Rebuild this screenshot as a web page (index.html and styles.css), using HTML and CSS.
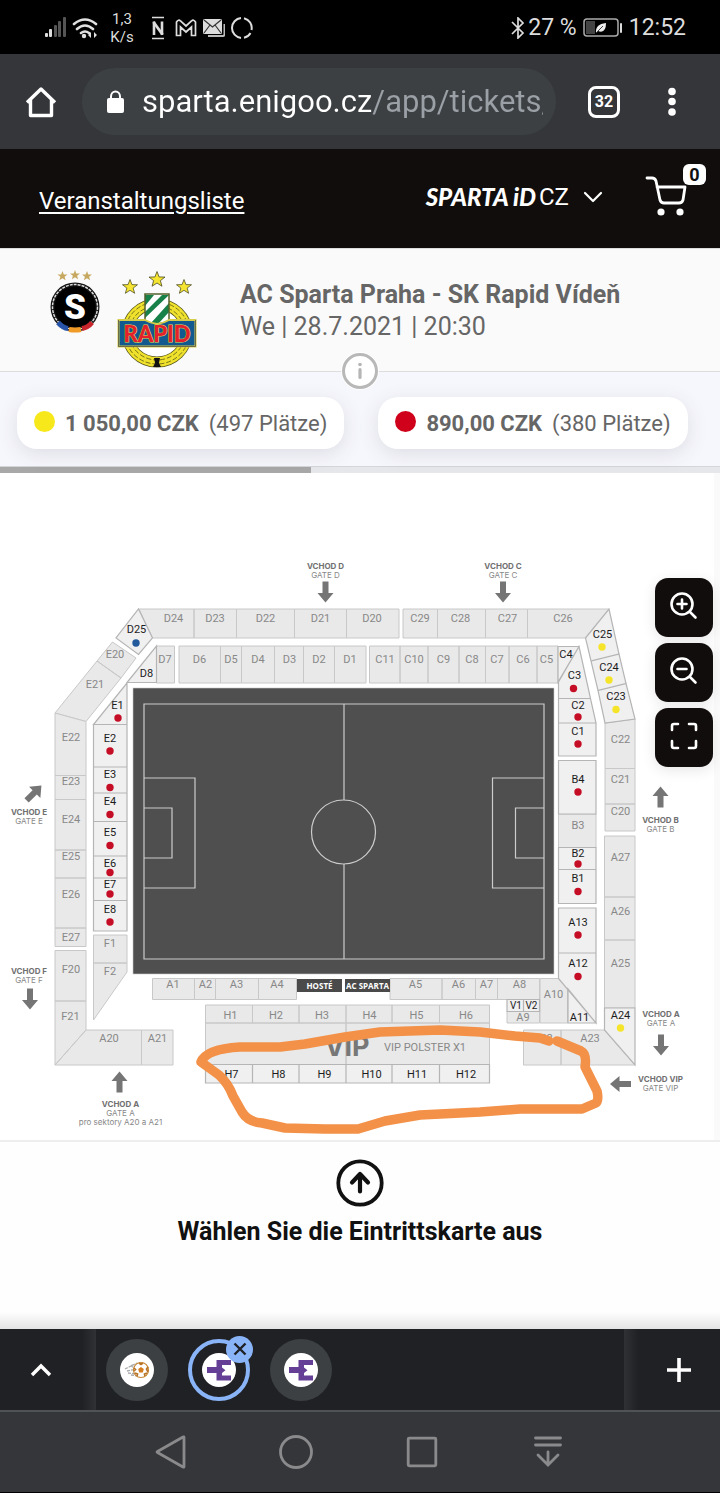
FILE: index.html
```html
<!DOCTYPE html>
<html lang="de">
<head>
<meta charset="utf-8">
<meta name="viewport" content="width=device-width, initial-scale=1">
<title>AC Sparta Praha - SK Rapid Vídeň</title>
<link rel="stylesheet" href="styles.css">
</head>
<body>
<div class="status">
  <svg class="ic-signal" width="22" height="22" viewBox="0 0 22 22"><g fill="#ddd"><rect y="16" width="3" height="4" rx="1"/><rect x="4" y="12" width="3" height="8" rx="1"/></g><g fill="#555"><rect x="9" y="8" width="3" height="12" rx="1"/><rect x="13" y="4" width="3" height="16" rx="1"/><rect x="18" width="3" height="20" rx="1"/></g></svg>
  <svg class="ic-wifi" width="26" height="22" viewBox="0 0 26 22"><g fill="none" stroke="#e0e0e0" stroke-width="2.6" stroke-linecap="round"><path d="M2 7q11-9 22 0M5 12q8-7 16 0M9 16q4-3 8 0"/></g><circle cx="12" cy="19" r="2.2" fill="#e0e0e0"/><path d="M16 18l3-3v6zM25 18l-3-3v6z" fill="#e0e0e0"/></svg>
  <div class="speed">1,3<br>K/s</div>
  <svg class="ic-n" width="14" height="24" viewBox="0 0 14 24"><path d="M1 1.500h12M1 22.500h12" stroke="#ddd" stroke-width="1.500"/><path d="M3 19V5.500M11 19V5.500" stroke="#ddd" stroke-width="2.600"/><path d="M2.500 6l9 12.500" stroke="#ddd" stroke-width="2.800"/></svg>
  <svg class="ic-m" width="22" height="18" viewBox="0 0 22 18"><path d="M1.500 16.500V3q2-3 4-1L11 7l5.500-5q2-2 4 1v13.500h-4V8L11 13 5.500 8v8.500z" fill="none" stroke="#ddd" stroke-width="1.700"/></svg>
  <svg class="ic-mail" width="22" height="18" viewBox="0 0 22 18"><path d="M5 17h15q1.500 0 1.500-2V5" fill="none" stroke="#bbb" stroke-width="2"/><rect width="19" height="15" rx="1.500" fill="#ddd"/><path d="M1 1l8.500 7L18 1M1 14l6-8M18 14l-6-8" fill="none" stroke="#333" stroke-width="1.200"/></svg>
  <svg class="ic-ring" width="22" height="22" viewBox="0 0 22 22"><g fill="none" stroke="#ddd" stroke-width="2"><path d="M13 1.200A10 10 0 0 1 20.500 13M19.500 16A10 10 0 0 1 13 20.800M10 20.900A10 10 0 0 1 10 1"/></g></svg>
  <span class="spacer"></span>
  <svg width="14" height="22" viewBox="0 0 14 22"><path d="M1 5l11 11-5 5V1l5 5L1 17" fill="none" stroke="#ddd" stroke-width="1.700"/></svg>
  <span class="pct">27 %</span>
  <svg class="ic-batt" width="40" height="20" viewBox="0 0 40 20"><rect x="1" y="1" width="34" height="17" rx="3" fill="none" stroke="#aaa" stroke-width="1.500"/><rect x="3" y="3" width="9" height="13" fill="#444"/><path d="M13 15q-1-9 10-10 0 11-8 8z" fill="#eee"/><path d="M13 15l7-7" stroke="#444" stroke-width="1"/><rect x="37" y="5" width="2" height="10" rx="1" fill="#ddd"/></svg>
  <span class="clock">12:52</span>
</div>

<div class="browser">
  <button class="plain" aria-label="Home"><svg width="32" height="32" viewBox="0 0 32 32"><path d="M2 16.500L16 3l14 13.500M5.500 14v15.500h21V14" fill="none" stroke="#fff" stroke-width="3.400" stroke-linejoin="round"/></svg></button>
  <label class="address">
    <svg width="18" height="24" viewBox="0 0 18 24"><rect x="0" y="8" width="17" height="15" rx="2" fill="#fff"/><path d="M4 9V6.500a4.500 5 0 0 1 9 0V9" fill="none" stroke="#fff" stroke-width="2"/></svg>
    <input class="url" type="text" aria-label="Adresse" value="sparta.enigoo.cz/app/tickets/">
  </label>
  <button class="tabcount" aria-label="Tabs">32</button>
  <button class="plain" aria-label="Menü"><svg width="8" height="32" viewBox="0 0 8 32"><g fill="#fff"><circle cx="4" cy="5.500" r="3.800"/><circle cx="4" cy="15.500" r="3.800"/><circle cx="4" cy="26" r="3.800"/></g></svg></button>
</div>

<header class="site">
  <a class="events-link" href="#events">Veranstaltungsliste</a>
  <span class="spacer"></span>
  <a class="brand" href="#id">SPARTA iD</a>
  <span class="lang">
    <select aria-label="Sprache"><option>CZ</option></select>
    <svg width="20" height="14" viewBox="0 0 20 14"><path d="M2 3l8 8 8-8" fill="none" stroke="#fff" stroke-width="2.200" stroke-linecap="round" stroke-linejoin="round"/></svg>
  </span>
  <a class="cart" href="#cart" aria-label="Warenkorb">
    <svg width="48" height="44" viewBox="0 0 48 44"><path d="M3 5h5q3 0 4 3l4 19q1 3 4 3h15q3 0 4-3l2-13H13" fill="none" stroke="#fff" stroke-width="2.800" stroke-linecap="round" stroke-linejoin="round"/><circle cx="17" cy="39" r="3.600" fill="#fff"/><circle cx="36" cy="39" r="3.600" fill="#fff"/></svg>
    <span class="cart-badge">0</span>
  </a>
</header>

<section class="event">
  <svg class="logo-sparta" width="50" height="66" viewBox="0 0 50 66">
    <defs><path id="star" d="M0-5L1.300-1.600 5-1.500 2.100.7 3.100 4.200 0 2.200-3.100 4.200-2.100.7-5-1.500-1.300-1.600z"/></defs>
    <g fill="#c6a95f"><use href="#star" x="12.500" y="6"/><use href="#star" x="25" y="3.500" transform="translate(0 1.500)"/><use href="#star" x="37" y="6"/></g>
    <circle cx="25" cy="37" r="24.500" fill="#111"/><circle cx="25" cy="37" r="22.500" fill="none" stroke="#ddd" stroke-width="1.500" stroke-dasharray="3 1"/><circle cx="25" cy="37" r="20.500" fill="#000"/>
    <g fill="none" stroke-width="5"><path d="M8 52.500q5 5.500 10 6" stroke="#2754a8"/><path d="M19 59.500q6 1 12 0" stroke="#f09a27"/><path d="M32 58.500q6-1 10-6" stroke="#c8242c"/></g>
    <text class="crest-s" x="25" y="49">S</text>
  </svg>
  <svg class="logo-rapid" width="80" height="100" viewBox="0 0 80 100">
    <g fill="#f5e532" stroke="#4a4a20" stroke-width=".5"><use href="#star" transform="translate(13 17) scale(1.500)"/><use href="#star" transform="translate(40 9.500) scale(1.600)"/><use href="#star" transform="translate(67 17) scale(1.500)"/></g>
    <ellipse cx="40" cy="63" rx="30" ry="29" fill="#fff" stroke="#55551a" stroke-width="11"/>
    <ellipse cx="40" cy="63" rx="30" ry="29" fill="none" stroke="#efe12c" stroke-width="9.500"/>
    <g fill="none" stroke="#77741b" stroke-width="1" stroke-dasharray="5 2"><ellipse cx="40" cy="63" rx="32" ry="31"/><ellipse cx="40" cy="63" rx="28" ry="27"/></g>
    <path d="M37 88h6l-1 5 2 4h-8l2-4z" fill="#111"/>
    <path d="M28 24h24v26q-2 3-12 4-10-1-12-4z" fill="#fff"/>
    <path d="M28 36V25h9zM28 48v-6l17-17h7zM34 53L52 33v9L41 54z" fill="#18814a"/>
    <path d="M28 24h24v26q-2 3-12 4-10-1-12-4z" fill="none" stroke="#53602c" stroke-width="1.500"/>
    <path d="M1.500 50H28q5 3 12 4 7-1 12-4h26.500v26.500h-77z" fill="#12598f" stroke="#d6ce4a" stroke-width="2"/><path d="M1.500 50v26.500h77V50" fill="none" stroke="#444" stroke-width=".7"/>
    <text class="crest-rapid" x="40" y="72">RAPID</text>
  </svg>
  <div class="event-text">
    <h1>AC Sparta Praha - SK Rapid Vídeň</h1>
    <p>We | 28.7.2021 | 20:30</p>
  </div>
  <button class="info" aria-label="Info"><svg width="38" height="38" viewBox="0 0 38 38"><circle cx="19" cy="19" r="19" fill="#fff"/><circle cx="19" cy="19" r="16.500" fill="#fff" stroke="#b8b8b8" stroke-width="3"/><circle cx="19" cy="12.500" r="1.800" fill="#b5b5b5"/><path d="M19 17.500v8" stroke="#b5b5b5" stroke-width="3.200" stroke-linecap="round"/></svg></button>
</section>

<section class="prices">
  <div class="chips">
    <button class="chip"><i class="dot yellow"></i><b>1 050,00 CZK</b><span>(497 Plätze)</span></button>
    <button class="chip"><i class="dot red"></i><b>890,00 CZK</b><span>(380 Plätze)</span></button>
  </div>
  <div class="track"><div class="thumb"></div></div>
</section>

<main class="map">
<svg class="stadium" viewBox="0 473 720 667" role="img" aria-label="Stadionplan">
  <rect x="714" y="473" width="6" height="667" fill="#fafafa"/>
  <defs><path id="arrow" d="M-3-10.500h6V1h5L0 10.500-8 1h5z" fill="#757575"/></defs>
  <g class="off">
    <path d="M139 609h55v29h-41.500zM194 609h42.500v29H194zM236.500 609h58v29h-58zM294.500 609h52v29h-52zM346.500 609H399v29h-52.500zM403 609h34.500v29H403zM437.500 609h48v29h-48zM485.500 609h42v29h-42zM527.500 609H609l-23.500 29h-58z"/>
    <path d="M112.500 642l23.500 16-15 20-24-17zM97 661l24 17-35 43.500-31-8.500z"/>
    <path d="M55 713l31 8.500v54H55zM55 775.500h31v24H55zM55 799.500h31V850H55zM55 850h31v28H55zM55 878h31v50H55zM55 928h31v18.500H55zM55 950.500h31v50.500H55zM55 1001h31v29l-31 35zM86 1030h55.500v35H55zM141.500 1030H173v35h-31.500z"/>
    <path d="M156.500 646h18v37h-18zM179 646h41.500v37H179zM220.500 646h21v37h-21zM241.500 646h33v37h-33zM274.500 646h29v37h-29zM303.500 646h31v37h-31zM334.500 646H366v37h-31.500zM369.500 646H400v37h-30.500zM400 646h28v37h-28zM428 646h31v37h-31zM459 646h26.500v37H459zM485.500 646H509v37h-23.500zM509 646h28v37h-28zM537 646h21v37h-21z"/>
    <path d="M93.500 935H127v28H93.500zM93.500 963H127v9l-33.500 48zM152.500 978.500h42v21h-42zM194.500 978.500h21v21h-21zM215.500 978.500h43v21h-43zM258.500 978.500h38v21h-38zM390 978.500h52v21h-52zM442 978.500h33.500v21H442zM475.500 978.500h22v21h-22zM497.500 978.500h42v21h-42zM507 1011.500h32.500v11.500H507zM540 978.500h18.500l9 10.500v34H540z"/>
    <path d="M205.500 1005h47v18h-47zM252.500 1005H299v18h-46.500zM299 1005h47v18h-47zM346 1005h46v18h-46zM392 1005h47.500v18H392zM439.500 1005h50v18h-50zM205.500 1023H346v41.500H205.500zM346 1023h143.500v41.500H346z"/>
    <path d="M558.500 814H596v33.500h-37.500zM605 723l30-4v49.500h-30zM605 768.500h30V804h-30zM605 804h30v27h-30zM604.500 836H635v61h-30.500zM604.500 897H635v43h-30.500zM604.500 940H635v68h-30.500zM561 1030h43.500l30.500 35h-74zM523.500 1030H561v35h-37.500z"/>
  </g>
  <g class="on">
    <path d="M138.500 609l14 29-14 16.500L116 638zM156.500 646v36.500H127zM127 683v41.500H93.500zM93.500 724.500H127V767H93.500zM93.500 767H127v26H93.500zM93.500 793H127v28.500H93.500zM93.500 821.500H127V856H93.500zM93.500 856H127v22H93.500zM93.500 878H127v22.500H93.500zM93.500 900.500H127V931H93.500z"/>
    <path d="M558 646.500h21L558 682zM579 646.500l11.500 52h-32V682zM558.500 698.500h32L596 723h-37.500zM558.500 723H596v33h-37.500zM558.500 760.500H596V814h-37.500zM558.500 847.500H596v22h-37.500zM558.500 869.500H596v34h-37.500zM558.500 908H596v45h-37.500zM558.500 953H596v70l-37.500-44.500zM568 989l28 34h-28zM507 999.500h16.500v12H507zM523.500 999.500h16v12h-16z"/>
    <path d="M609 609l10 45-28 7-5.500-23zM619 654l7 29.500-28 7-7-29.500zM626 683.500l9 35.500-30 4-7-32.500zM604.500 1008H635v57l-30.500-35z"/>
    <path d="M205.500 1064.500h47v18.500h-47zM252.500 1064.500H299v18.500h-46.500zM299 1064.500h47v18.500h-47zM346 1064.500h46v18.500h-46zM392 1064.500h47.500v18.500H392zM439.500 1064.500h50v18.500h-50z"/>
  </g>
  <rect x="133" y="688" width="421" height="286" fill="#4f4f4f" stroke="#c8c8c8" stroke-width=".6"/>
  <path d="M144 704h400v255H144zM344 704v96M344 864v95M144 778h51v110h-51M144 808h28v50h-28M544 778h-51.500v110H544M544 808h-28.500v50H544" fill="none" stroke="#ccc" stroke-width="1.200"/>
  <circle cx="343.500" cy="832" r="32" fill="none" stroke="#ccc" stroke-width="1.200"/>
  <path d="M297 979h45v13h-45zM345 979h45v13h-45z" fill="#4a4a4a"/>
  <g class="tag"><text x="319.500" y="988.500">HOSTÉ</text><text x="367.500" y="988.500">AC SPARTA</text></g>

  <g class="lbl">
    <text x="173.500" y="622">D24</text><text x="215" y="622">D23</text><text x="265.500" y="622">D22</text><text x="320.500" y="622">D21</text><text x="372" y="622">D20</text><text x="420" y="622">C29</text><text x="460.500" y="622">C28</text><text x="507.500" y="622">C27</text><text x="563" y="622">C26</text>
    <text x="165" y="663">D7</text><text x="199.500" y="663">D6</text><text x="231" y="663">D5</text><text x="258" y="663">D4</text><text x="289.500" y="663">D3</text><text x="319" y="663">D2</text><text x="350" y="663">D1</text><text x="385" y="663">C11</text><text x="414" y="663">C10</text><text x="443.500" y="663">C9</text><text x="472" y="663">C8</text><text x="497" y="663">C7</text><text x="523" y="663">C6</text><text x="546.500" y="663">C5</text>
    <text x="115" y="658">E20</text><text x="95" y="688">E21</text><text x="71" y="741">E22</text><text x="71" y="785">E23</text><text x="71" y="823">E24</text><text x="71" y="860">E25</text><text x="71" y="898">E26</text><text x="71" y="941">E27</text><text x="71" y="973">F20</text><text x="70.500" y="1020">F21</text><text x="109" y="1042">A20</text><text x="157.500" y="1042">A21</text>
    <text x="110" y="947">F1</text><text x="110" y="975">F2</text><text x="173" y="988">A1</text><text x="205.500" y="988">A2</text><text x="236.500" y="988">A3</text><text x="277" y="988">A4</text><text x="415.500" y="988">A5</text><text x="458.500" y="988">A6</text><text x="486.500" y="988">A7</text><text x="519.500" y="988">A8</text><text x="523" y="1021">A9</text><text x="553.500" y="998">A10</text>
    <text x="230.500" y="1019">H1</text><text x="276" y="1019">H2</text><text x="322" y="1019">H3</text><text x="369.500" y="1019">H4</text><text x="416.500" y="1019">H5</text><text x="466" y="1019">H6</text><text x="425" y="1051">VIP POLSTER X1</text>
    <text x="578" y="829">B3</text><text x="620.500" y="743">C22</text><text x="620.500" y="783">C21</text><text x="620.500" y="815">C20</text><text x="620.500" y="861">A27</text><text x="620.500" y="915">A26</text><text x="620.500" y="967">A25</text><text x="590" y="1042">A23</text><text x="543" y="1042">A22</text>
  </g>
  <g class="lbl strong">
    <text x="136.500" y="633">D25</text><text x="146.500" y="677">D8</text><text x="117.500" y="709">E1</text><text x="110" y="742">E2</text><text x="110" y="778">E3</text><text x="110" y="805">E4</text><text x="110" y="836">E5</text><text x="110" y="867">E6</text><text x="110" y="888">E7</text><text x="110" y="913">E8</text>
    <text x="566" y="658">C4</text><text x="574.500" y="679">C3</text><text x="578" y="709">C2</text><text x="578" y="735">C1</text><text x="578" y="783">B4</text><text x="578" y="857">B2</text><text x="578" y="882">B1</text><text x="578" y="926">A13</text><text x="578" y="967">A12</text><text x="579.500" y="1021">A11</text><text x="602.500" y="638">C25</text><text x="609" y="671">C24</text><text x="616" y="700">C23</text><text x="620.500" y="1019">A24</text>
    <text x="231.500" y="1078">H7</text><text x="278.500" y="1078">H8</text><text x="324.500" y="1078">H9</text><text x="371.500" y="1078">H10</text><text x="417" y="1078">H11</text><text x="466" y="1078">H12</text>
    <g class="small"><text x="516" y="1009">V1</text><text x="531.500" y="1009">V2</text></g>
  </g>
  <circle cx="136" cy="643" r="3.700" fill="#225a9b"/>
  <g fill="#c50d26"><circle cx="118" cy="718" r="3.700"/><circle cx="110" cy="751" r="3.700"/><circle cx="110" cy="787.500" r="3.700"/><circle cx="110" cy="814.500" r="3.700"/><circle cx="110" cy="845.500" r="3.700"/><circle cx="110" cy="872.500" r="3.700"/><circle cx="110" cy="894" r="3.700"/><circle cx="110" cy="922" r="3.700"/><circle cx="573.500" cy="688.500" r="3.700"/><circle cx="578" cy="717" r="3.700"/><circle cx="578" cy="744" r="3.700"/><circle cx="578" cy="792" r="3.700"/><circle cx="578" cy="864" r="3.700"/><circle cx="578" cy="891.500" r="3.700"/><circle cx="578" cy="935" r="3.700"/><circle cx="578" cy="976.500" r="3.700"/></g>
  <g fill="#f5e42a"><circle cx="602" cy="647" r="3.700"/><circle cx="609" cy="680" r="3.700"/><circle cx="616" cy="709.500" r="3.700"/><circle cx="620.500" cy="1028" r="3.700"/></g>

  <g class="gate">
    <text class="gate-name" x="325.500" y="569">VCHOD D</text><text x="325.500" y="578">GATE D</text>
    <text class="gate-name" x="503" y="569">VCHOD C</text><text x="503" y="578">GATE C</text>
    <text class="gate-name" x="29" y="815">VCHOD E</text><text x="29" y="824">GATE E</text>
    <text class="gate-name" x="29" y="974">VCHOD F</text><text x="29" y="983">GATE F</text>
    <text class="gate-name" x="120.500" y="1107">VCHOD A</text><text x="120.500" y="1116">GATE A</text><text x="120.500" y="1125">pro sektory A20 a A21</text>
    <text class="gate-name" x="660.500" y="823">VCHOD B</text><text x="660.500" y="832">GATE B</text>
    <text class="gate-name" x="661" y="1017">VCHOD A</text><text x="661" y="1026">GATE A</text>
    <text class="gate-name" x="660.500" y="1082">VCHOD VIP</text><text x="660.500" y="1091">GATE VIP</text>
  </g>
  <use href="#arrow" x="325.500" y="592"/><use href="#arrow" x="503" y="592"/><use href="#arrow" x="30" y="999"/><use href="#arrow" x="661" y="1045"/>
  <use href="#arrow" transform="translate(119.500 1082) rotate(180)"/><use href="#arrow" transform="translate(660.500 797) rotate(180)"/><use href="#arrow" transform="translate(34 793) rotate(225)"/><use href="#arrow" transform="translate(620.500 1084) rotate(90)"/>
  <text class="vip" x="347" y="1056">VIP</text>
  <path d="M549 1041L540 1038 515 1036 480 1032 440 1030 380 1032 345 1037 305 1044 280 1047 240 1047Q206 1049 201 1062L219 1075Q228 1083 233 1096L242 1112Q248 1122 262 1123L285 1128 325 1129H358L385 1121 420 1115 480 1112 520 1109H582L596 1103Q599 1100 597 1091L585 1067Q587 1054 581 1051L557 1041" fill="none" stroke="#f39148" stroke-width="9.500" stroke-linecap="round" stroke-linejoin="round"/>
</svg>
<div class="tools">
  <button aria-label="Vergrößern"><svg width="30" height="30" viewBox="0 0 30 30"><circle cx="13" cy="13" r="10.500"/><path d="M21 21l5.500 5.500M13 8.500v9M8.500 13h9"/></svg></button>
  <button aria-label="Verkleinern"><svg width="30" height="30" viewBox="0 0 30 30"><circle cx="13" cy="13" r="10.500"/><path d="M21 21l5.500 5.500M8.500 13h9"/></svg></button>
  <button aria-label="Vollbild"><svg width="30" height="30" viewBox="0 0 30 30"><path d="M3 9V5q0-2 2-2h4M20 3h5q2 0 2 2v4M27 20v5q0 2-2 2h-5M9 27H5q-2 0-2-2v-5"/></svg></button>
</div>
</main>

<button class="choose">
  <svg width="48" height="48" viewBox="0 0 48 48"><g fill="none" stroke="#111"><circle cx="24" cy="24" r="21.700" stroke-width="3.800"/><path d="M24 32.500V15M16 23.500l8-8.500 8 8.500" stroke-width="4.200" stroke-linecap="round" stroke-linejoin="round"/></g></svg>
  <span>Wählen Sie die Eintrittskarte aus</span>
</button>

<nav class="tabs">
  <button class="tabs-up" aria-label="Tabs anzeigen"><svg width="22" height="16" viewBox="0 0 22 16"><path d="M2 13l9-9 9 9" fill="none" stroke="#fff" stroke-width="3.400"/></svg></button>
  <button class="tab" aria-label="Tab 1"><svg width="34" height="34" viewBox="0 0 34 34"><circle cx="17" cy="17" r="17" fill="#fff"/><path d="M5 16l12-6M7 18l10-2M8 20l9 1M11 12l6 8M11 22l7 1" stroke="#aaa" stroke-width="1.300" stroke-dasharray="3 1"/><circle cx="21" cy="17" r="7.500" fill="#fff" stroke="#c98735" stroke-width="1.200"/><path d="M21 14l2.800 2-1 3.500h-3.600l-1-3.500z" fill="#d57c1e"/><path d="M19 10l2 1.500 2-1.500M28 14l-1.500 2 1.500 3M25 23l-.5-2 2.500-1M17 23l.5-2-2.500-1M14 15l1.500 1.500L14 18" fill="none" stroke="#b77428" stroke-width="1.700"/></svg></button>
  <button class="tab active" aria-label="Tab 2"><svg width="34" height="34" viewBox="0 0 34 34"><circle cx="17" cy="17" r="17" fill="#fff"/><path id="eni" d="M14.500 7H29v5h-9v2.500l3.500 2.700-3.500 2.800V22.500h9v5H14.500V20H5v-6h9.500z" fill="#653f96"/></svg><i class="close"><svg width="14" height="14" viewBox="0 0 14 14"><path d="M1.500 1.500l11 11M12.500 1.500l-11 11" stroke="#202124" stroke-width="2.400"/></svg></i></button>
  <button class="tab" aria-label="Tab 3"><svg width="34" height="34" viewBox="0 0 34 34"><circle cx="17" cy="17" r="17" fill="#fff"/><use href="#eni"/></svg></button>
  <button class="tabs-add" aria-label="Neuer Tab"><svg width="26" height="26" viewBox="0 0 26 26"><path d="M13 1v24M1 13h24" stroke="#fff" stroke-width="3.600"/></svg></button>
</nav>

<nav class="system">
  <button aria-label="Zurück"><svg width="34" height="34" viewBox="0 0 34 34"><path d="M31 2.500v29q0 1-1 .5L4.500 17.500q-1-.5 0-1L30 2q1-.5 1 .5z"/></svg></button>
  <button aria-label="Startbildschirm"><svg width="34" height="34" viewBox="0 0 34 34"><circle cx="17" cy="17" r="15.500"/></svg></button>
  <button aria-label="Übersicht"><svg width="34" height="34" viewBox="0 0 34 34"><rect x="3.200" y="3.200" width="27.600" height="27.600" rx="1"/></svg></button>
  <button aria-label="Benachrichtigungen"><svg width="34" height="34" viewBox="0 0 34 34"><path d="M4.500 3h25M4.500 10h25M17 17v13M7 20l10 10 10-10" stroke-linecap="round"/></svg></button>
</nav>
</body>
</html>
```
FILE: styles.css
```css
* { box-sizing: border-box; }
body { margin: 0; background: #fff; font-family: Roboto, "Liberation Sans", sans-serif; color: #666; }
button { border: 0; margin: 0; padding: 0; background: none; font: inherit; color: inherit; }
svg { display: block; flex: none; }
.spacer { flex: 1; }

.status { display: flex; align-items: center; height: 54px; padding: 1px 34px 0 45px; background: #000; color: #ddd; font-size: 23px; }
.ic-wifi { margin-left: 5px; }
.speed { margin-left: 12px; width: 24px; font-size: 15px; line-height: 18px; text-align: center; }
.ic-n { margin-left: 17px; }
.ic-m { margin-left: 10px; }
.ic-mail { margin-left: 6px; }
.ic-ring { margin-left: 6px; }
.pct { margin: 0 6px 0 3px; }
.ic-batt { margin-right: 6px; }

.browser { display: flex; align-items: center; height: 95px; padding: 0 44px 0 25px; background: #35363a; }
.address { flex: 1; min-width: 0; display: flex; align-items: center; height: 67px; margin: 0 32px 0 25px; padding: 0 13px 0 25px; gap: 17px; border-radius: 34px; background: #3c4043; }
.url { flex: 1; min-width: 0; border: 0; padding: 0; outline: 0; font: 31px Roboto, sans-serif; line-height: 40px; color: transparent; background: linear-gradient(90deg, #fff 229px, #9aa0a6 229px); -webkit-background-clip: text; background-clip: text; }
.tabcount { width: 32px; height: 32px; margin-right: 48px; border: 3px solid #fff; border-radius: 8px; color: #fff; font-size: 16px; font-weight: 700; }

.site { display: flex; align-items: center; height: 99px; padding: 0 14px 0 39px; background: #110d0c; color: #fff; }
.events-link { color: #fff; font-size: 24px; line-height: 32px; padding-top: 4px; text-decoration-thickness: 2px; text-underline-offset: 3px; }
.brand { color: #fff; font: italic 900 24px/32px Lato, sans-serif; text-decoration: none; }
.lang { display: grid; align-items: center; width: 64px; margin: 0 41px 4px 3px; }
.brand { margin-bottom: 4px; }
.lang select { grid-area: 1 / 1; width: 100%; appearance: none; border: 0; padding: 0; background: none; color: #fff; font: 24px/32px Roboto, sans-serif; }
.lang svg { grid-area: 1 / 1; justify-self: end; pointer-events: none; }
.cart { position: relative; width: 62px; margin-bottom: 8px; }
.cart-badge { position: absolute; right: 0; top: -9px; width: 23px; height: 21px; border-radius: 6px; background: #fff; color: #111; font-size: 18px; font-weight: 700; line-height: 21px; text-align: center; }

.event { position: relative; display: flex; align-items: flex-start; height: 124px; padding: 21px 16px 0 50px; border-top: 1px solid #ddd; border-bottom: 1px solid #ddd; background: #fafafa; }
.logo-rapid { margin-left: 17px; }
.event-text { margin-left: 43px; padding-top: 9px; line-height: 32px; }
.event-text h1, .event-text p { margin: 0; font-size: 25px; }
.event-text h1 { font-weight: 700; }
.info { position: absolute; left: 50%; bottom: -19px; margin-left: -19px; }
.crest-s { font: 900 35px Roboto, sans-serif; fill: #fff; text-anchor: middle; }
.crest-rapid { font: 900 22px Lato, sans-serif; fill: #e3202c; stroke: #e8d94a; stroke-width: 1px; paint-order: stroke; text-anchor: middle; }

.prices { background: #f6f7fc; overflow: hidden; }
.chips { display: flex; gap: 34px; padding: 25px 17px 17px; }
.chip { display: flex; align-items: center; height: 52px; padding: 0 17px; border-radius: 20px; background: #fff; box-shadow: 0 5px 20px rgba(60, 50, 80, .13); font-size: 22px; white-space: nowrap; }
.chip b { margin: 0 10px; }
.dot { width: 21px; height: 21px; margin-top: -4px; border-radius: 50%; }
.yellow { background: #f7e81c; }
.red { background: #d0021b; }
.track { height: 7px; border-top: 1px solid #d5d6d9; background: #e5e7eb; }
.thumb { width: 43.2%; height: 100%; background: #a8a8a8; }

.map { position: relative; border-bottom: 2px solid #eee; }
.stadium { width: 100%; height: auto; }
.off path { fill: #e9e9e9; stroke: #c8c8c8; }
.on path { fill: #f0f0f0; stroke: #b5b5b5; stroke-width: 1.2px; }
.lbl { font: 11px Roboto, sans-serif; fill: #888; text-anchor: middle; }
.strong { fill: #1c1c1c; }
.small { font-size: 10px; }
.gate { font: 8px Inter, sans-serif; fill: #888; text-anchor: middle; }
.gate-name { font-weight: 700; fill: #707070; }
.tag { font: 700 8px "Open Sans", sans-serif; fill: #fff; text-anchor: middle; }
.vip { font: 700 27px Inter, sans-serif; fill: #777; text-anchor: middle; }
.tools { position: absolute; right: 7px; top: 105px; display: grid; gap: 6px; }
.tools button { display: grid; place-items: center; width: 58px; height: 59px; padding-bottom: 4px; border-radius: 13px; background: #110d0c; box-shadow: 0 3px 14px rgba(0, 0, 0, .1); }
.tools svg { fill: none; stroke: #fff; stroke-width: 2.6px; stroke-linecap: round; stroke-linejoin: round; }

.choose { display: flex; flex-direction: column; align-items: center; width: 100%; height: 187px; padding-top: 17px; gap: 9px; background: linear-gradient(#fefefe 170px, #e4e4e4); color: #111; font-size: 25px; font-weight: 700; line-height: 32px; }

.tabs { display: flex; align-items: center; height: 83px; border-bottom: 2px solid #505356; background: #202124; }
.tabs-up, .tabs-add { display: grid; place-items: center; height: 100%; }
.tabs-up { width: 96px; padding-right: 14px; margin-right: 10px; background: linear-gradient(90deg, transparent 82px, #303134); }
.tabs-add { width: 96px; margin-left: auto; padding-left: 14px; background: linear-gradient(270deg, transparent 82px, #303134); }
.tab { position: relative; display: grid; place-items: center; width: 62px; height: 62px; margin-right: 20px; border-radius: 50%; background: #3c4043; }
.active { border: 4px solid #8ab4f8; background: #202124; }
.close { position: absolute; right: -7px; top: -7px; display: grid; place-items: center; width: 27px; height: 27px; border-radius: 50%; background: #8ab4f8; }

.system { display: flex; justify-content: center; gap: 92px; height: 81px; padding: 23px 2px 0 0; border-bottom: 1px solid #000; background: #35363a; }
.system button { height: 34px; }
.system svg { fill: none; stroke: #8a8a8c; stroke-width: 2.8px; }
```
